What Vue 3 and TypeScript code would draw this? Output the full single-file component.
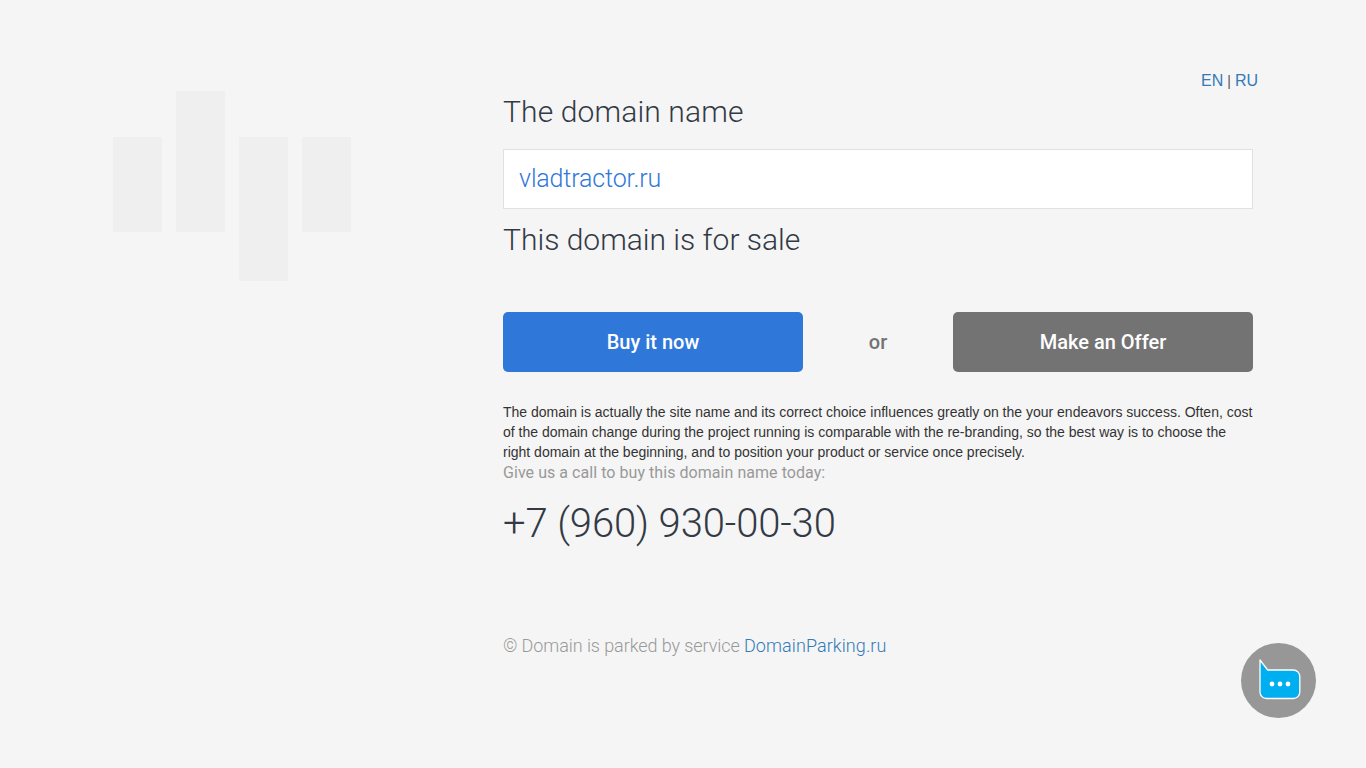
<script setup lang="ts">
const bars = [
  { key: 'a', cls: 'bar-mid' },
  { key: 'b', cls: 'bar-tall' },
  { key: 'c', cls: 'bar-low' },
  { key: 'd', cls: 'bar-mid' },
]
</script>

<template>
  <div class="page">
    <aside class="logo">
      <div v-for="bar in bars" :key="bar.key" class="bar" :class="bar.cls"></div>
    </aside>

    <main class="content">
      <div class="lang">
        <a href="#">EN</a><span class="sep">|</span><a href="#">RU</a>
      </div>
      <h2 class="title first">The domain name</h2>
      <div class="domain-box">vladtractor.ru</div>
      <h2 class="title sale">This domain is for sale</h2>

      <div class="actions">
        <a href="#" class="btn btn-buy">Buy it now</a>
        <span class="or">or</span>
        <a href="#" class="btn btn-offer">Make an Offer</a>
      </div>

      <p class="about">
        The domain is actually the site name and its correct choice influences greatly on the your endeavors success. Often, cost of the domain change during the project running is comparable with the re-branding, so the best way is to choose the right domain at the beginning, and to position your product or service once precisely.
      </p>
      <p class="call">Give us a call to buy this domain name today:</p>
      <div class="phone">+7 (960) 930-00-30</div>

      <p class="footer">© Domain is parked by service <a href="#">DomainParking.ru</a></p>
    </main>

    <button class="chat" type="button" aria-label="Chat">
      <svg width="44" height="44" viewBox="0 0 44 44">
        <path d="M3 1 L10.7 11 H36.3 A6.5 6.5 0 0 1 42.8 17.5 V33 A6.5 6.5 0 0 1 36.3 39.5 H9.5 A6.5 6.5 0 0 1 3 33 Z" fill="#00aff0" stroke="#fff" stroke-width="1.3" stroke-linejoin="round" />
        <circle cx="15" cy="25" r="2.4" fill="#fff" />
        <circle cx="23" cy="25" r="2.4" fill="#fff" />
        <circle cx="31" cy="25" r="2.4" fill="#fff" />
      </svg>
    </button>
  </div>
</template>

<style>
html,
body {
  background: #f5f5f5;
}
</style>

<style scoped>
.page {
  display: flex;
  align-items: flex-start;
  width: 1366px;
  min-height: 768px;
  box-sizing: border-box;
  padding: 91px 0 0 113px;
  background: #f5f5f5;
  font-family: Roboto, "Liberation Sans", sans-serif;
}

.logo {
  display: flex;
  align-items: flex-start;
  gap: 14px;
  width: 390px;
  flex-shrink: 0;
}

.bar {
  width: 49px;
  background: #efefef;
}

.bar-mid {
  height: 95px;
  margin-top: 46px;
}

.bar-tall {
  height: 141px;
}

.bar-low {
  height: 144px;
  margin-top: 46px;
}

.content {
  position: relative;
  width: 750px;
  flex-shrink: 0;
}

.lang {
  position: absolute;
  top: -20px;
  right: -5px;
  font-family: "Liberation Sans", Arial, sans-serif;
  font-size: 16px;
  line-height: 20px;
  color: #555;
}

.lang a,
.footer a {
  color: #337ab7;
  text-decoration: none;
}

.footer a {
  letter-spacing: 0.08px;
}

.sep {
  margin: 0 4px;
  font-size: 14px;
}

.title {
  margin: 0;
  font-size: 30px;
  font-weight: 300;
  line-height: 40px;
  color: #333a45;
}

.first {
  padding-top: 1px;
  letter-spacing: 0.13px;
}

.domain-box {
  margin-top: 17px;
  height: 60px;
  box-sizing: border-box;
  padding-left: 15px;
  border: 1px solid #e1e1e1;
  background: #fff;
  font-size: 25px;
  font-weight: 300;
  letter-spacing: -0.14px;
  line-height: 58px;
  color: #2f78d9;
}

.sale {
  margin-top: 11px;
}

.actions {
  display: flex;
  align-items: center;
  margin-top: 52px;
}

.btn {
  width: 300px;
  height: 60px;
  border-radius: 5px;
  font-size: 20px;
  font-weight: 500;
  line-height: 60px;
  text-align: center;
  color: #fff;
  text-decoration: none;
}

.btn-buy {
  background: #2f78d9;
}

.btn-offer {
  background: #737373;
}

.or {
  flex: 1;
  font-size: 20px;
  font-weight: 500;
  text-align: center;
  color: #737373;
}

.about {
  margin: 30px 0 0;
  font-family: "Liberation Sans", Arial, sans-serif;
  font-size: 14px;
  line-height: 20px;
  color: #333;
}

.call {
  margin: 1px 0 0;
  font-size: 16px;
  letter-spacing: 0.05px;
  line-height: 20px;
  color: #999;
}

.phone {
  margin-top: 16px;
  font-size: 40px;
  font-weight: 300;
  letter-spacing: -0.12px;
  line-height: 50px;
  color: #333a45;
}

.footer {
  margin: 84px 0 0;
  font-size: 18px;
  font-weight: 300;
  letter-spacing: -0.08px;
  line-height: 26px;
  color: #999;
}

.chat {
  position: fixed;
  left: 1241px;
  top: 643px;
  display: flex;
  align-items: center;
  justify-content: center;
  width: 75px;
  height: 75px;
  padding: 0;
  border: 0;
  border-radius: 50%;
  background: #979797;
}
</style>
